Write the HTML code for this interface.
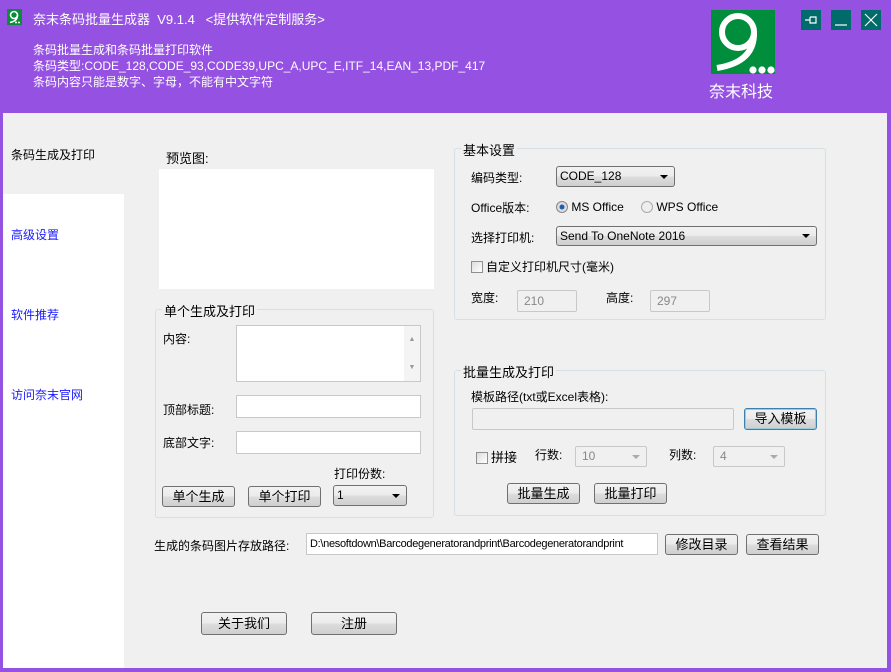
<!DOCTYPE html><html><head><meta charset="utf-8"><style>
*{box-sizing:border-box;margin:0;padding:0}
body{width:891px;height:672px;background:#9551e2;position:relative;overflow:hidden;font-family:"Liberation Sans","Noto Sans CJK SC",sans-serif;font-size:12px;color:#000}
.a{position:absolute;white-space:nowrap}
.w{color:#fff}
.btn{position:absolute;border:1px solid #707070;border-radius:3px;background:linear-gradient(#f2f2f2,#ebebeb 50%,#dddddd 51%,#cfcfcf);text-align:center;font-size:13px}
.inp{position:absolute;background:#fff;border:1px solid #c8c8c8}
.grp{position:absolute;border:1px solid #d5dfe5;border-radius:3px}
.lg{position:absolute;background:#f0f0f0;padding:0 2px;font-size:13px;top:-9px;left:6px}
.sel{position:absolute;border:1px solid #707070;border-radius:3px;background:linear-gradient(#f2f2f2,#ebebeb 50%,#dddddd 51%,#cfcfcf);font-size:12px;padding-left:3px}
.sel:after{content:"";position:absolute;right:6px;top:50%;margin-top:-2px;border:4px solid transparent;border-top:4px solid #000;border-bottom:0}
.dis{position:absolute;border:1px solid #c8c8c8;background:#f0f0f0;color:#888;font-size:12px;padding-left:6px;border-radius:2px}
.dd:after{content:"";position:absolute;right:6px;top:50%;margin-top:-2px;border:4px solid transparent;border-top:4px solid #aaa;border-bottom:0}
.tb{position:absolute;top:10px;width:20px;height:20px;background:#006b6b}
.cb{display:inline-block;width:12px;height:12px;border:1px solid #8e8f8f;background:linear-gradient(135deg,#ddd,#fff);vertical-align:-2px;margin-right:3px}
</style></head><body>
<svg class="a" style="left:7px;top:9px" width="15" height="16"><rect width="15" height="16" fill="#0a8d3a"/><circle cx="7" cy="6" r="3.5" fill="none" stroke="#fff" stroke-width="1.6"/><path d="M10.5 6 Q10.5 12 3 13.5" fill="none" stroke="#fff" stroke-width="1.6"/><circle cx="9" cy="13.5" r="1" fill="#fff"/><circle cx="12" cy="13.5" r="1" fill="#fff"/></svg>
<div class="a w" style="left:33px;top:9px;font-size:13px">奈末条码批量生成器 &nbsp;V9.1.4 &nbsp;&nbsp;&lt;提供软件定制服务&gt;</div>
<div class="a w" style="left:33px;top:41px">条码批量生成和条码批量打印软件</div>
<div class="a w" style="left:33px;top:57px">条码类型:CODE_128,CODE_93,CODE39,UPC_A,UPC_E,ITF_14,EAN_13,PDF_417</div>
<div class="a w" style="left:33px;top:73px">条码内容只能是数字、字母，不能有中文字符</div>
<svg class="a" style="left:711px;top:10px" width="64" height="64"><rect width="64" height="64" fill="#008e3c"/><circle cx="27" cy="22" r="16" fill="none" stroke="#fff" stroke-width="6"/><path d="M43 22 Q44 52 6 58" fill="none" stroke="#fff" stroke-width="6"/><circle cx="42" cy="60" r="3.6" fill="#fff"/><circle cx="51" cy="60" r="3.6" fill="#fff"/><circle cx="60" cy="60" r="3.6" fill="#fff"/></svg>
<div class="a w" style="left:709px;top:78px;font-size:16px">奈末科技</div>
<svg class="tb" style="left:801px"><rect width="20" height="20" fill="#006b6b"/><path d="M4 10H9M9 7V13H15V7H9" fill="none" stroke="#fff" stroke-width="1.2"/></svg>
<svg class="tb" style="left:831px"><rect width="20" height="20" fill="#006b6b"/><path d="M4 15H16" stroke="#fff" stroke-width="1.2"/></svg>
<svg class="tb" style="left:861px"><rect width="20" height="20" fill="#006b6b"/><path d="M4 4L16 16M16 4L4 16" stroke="#fff" stroke-width="1.2"/></svg>
<div class="a" style="left:3px;top:113px;width:884px;height:555px;background:#f0f0f0"></div>
<div class="a" style="left:3px;top:194px;width:121px;height:474px;background:#fff"></div>
<div class="a" style="left:11px;top:146px;font-size:12px">条码生成及打印</div>
<div class="a" style="left:11px;top:226px;color:#1a1aff">高级设置</div>
<div class="a" style="left:11px;top:306px;color:#1a1aff">软件推荐</div>
<div class="a" style="left:11px;top:386px;color:#1a1aff">访问奈末官网</div>
<div class="a" style="left:166px;top:148px;font-size:13px">预览图:</div>
<div class="a" style="left:159px;top:169px;width:275px;height:120px;background:#fff"></div>
<div class="grp" style="left:155px;top:309px;width:279px;height:209px"><div class="lg">单个生成及打印</div></div>
<div class="a" style="left:163px;top:330px">内容:</div>
<div class="inp" style="left:236px;top:325px;width:185px;height:57px"><div class="a" style="right:0;top:0;width:16px;height:55px;background:#f4f4f4;color:#999;font-size:7px;text-align:center;line-height:28px">▲<br>▼</div></div>
<div class="a" style="left:163px;top:401px">顶部标题:</div>
<div class="inp" style="left:236px;top:395px;width:185px;height:23px"></div>
<div class="a" style="left:163px;top:434px">底部文字:</div>
<div class="inp" style="left:236px;top:431px;width:185px;height:23px"></div>
<div class="a" style="left:334px;top:465px">打印份数:</div>
<div class="btn" style="left:162px;top:486px;width:73px;height:21px;line-height:19px">单个生成</div>
<div class="btn" style="left:248px;top:486px;width:73px;height:21px;line-height:19px">单个打印</div>
<div class="sel" style="left:333px;top:485px;width:74px;height:21px;line-height:19px">1</div>
<div class="grp" style="left:454px;top:148px;width:372px;height:172px"><div class="lg">基本设置</div></div>
<div class="a" style="left:471px;top:169px">编码类型:</div>
<div class="sel" style="left:556px;top:166px;width:119px;height:21px;line-height:19px">CODE_128</div>
<div class="a" style="left:471px;top:199px">Office版本:</div>
<div class="a" style="left:556px;top:200px"><span style="display:inline-block;width:12px;height:12px;border-radius:50%;border:1px solid #888;background:radial-gradient(#1a5fb4 30%,#ddd 40%);vertical-align:-2px"></span> MS Office</div>
<div class="a" style="left:641px;top:200px"><span style="display:inline-block;width:12px;height:12px;border-radius:50%;border:1px solid #aaa;background:#eee;vertical-align:-2px"></span> WPS Office</div>
<div class="a" style="left:471px;top:229px">选择打印机:</div>
<div class="sel" style="left:556px;top:226px;width:261px;height:20px;line-height:18px">Send To OneNote 2016</div>
<div class="a" style="left:471px;top:258px"><span class="cb"></span>自定义打印机尺寸(毫米)</div>
<div class="a" style="left:471px;top:289px">宽度:</div>
<div class="dis" style="left:517px;top:290px;width:60px;height:22px;line-height:20px">210</div>
<div class="a" style="left:606px;top:289px">高度:</div>
<div class="dis" style="left:650px;top:290px;width:60px;height:22px;line-height:20px">297</div>
<div class="grp" style="left:454px;top:370px;width:372px;height:146px"><div class="lg">批量生成及打印</div></div>
<div class="a" style="left:471px;top:388px">模板路径(txt或Excel表格):</div>
<div class="dis" style="left:472px;top:408px;width:262px;height:22px"></div>
<div class="btn" style="left:744px;top:408px;width:73px;height:22px;line-height:20px;border-color:#3c7fb1;box-shadow:inset 0 0 0 1px #9cd">导入模板</div>
<div class="a" style="left:476px;top:447px;font-size:13px"><span class="cb"></span>拼接</div>
<div class="a" style="left:535px;top:446px">行数:</div>
<div class="dis dd" style="left:575px;top:446px;width:72px;height:21px;line-height:19px">10</div>
<div class="a" style="left:669px;top:446px">列数:</div>
<div class="dis dd" style="left:713px;top:446px;width:72px;height:21px;line-height:19px">4</div>
<div class="btn" style="left:507px;top:483px;width:73px;height:21px;line-height:19px">批量生成</div>
<div class="btn" style="left:594px;top:483px;width:73px;height:21px;line-height:19px">批量打印</div>
<div class="a" style="left:154px;top:537px">生成的条码图片存放路径:</div>
<div class="inp" style="left:306px;top:533px;width:352px;height:22px;line-height:20px;padding-left:3px;font-size:11px;letter-spacing:-0.3px;overflow:hidden">D:\nesoftdown\Barcodegeneratorandprint\Barcodegeneratorandprint</div>
<div class="btn" style="left:665px;top:534px;width:73px;height:21px;line-height:19px">修改目录</div>
<div class="btn" style="left:746px;top:534px;width:73px;height:21px;line-height:19px">查看结果</div>
<div class="btn" style="left:201px;top:612px;width:86px;height:23px;line-height:21px">关于我们</div>
<div class="btn" style="left:311px;top:612px;width:86px;height:23px;line-height:21px">注册</div>
</body></html>
